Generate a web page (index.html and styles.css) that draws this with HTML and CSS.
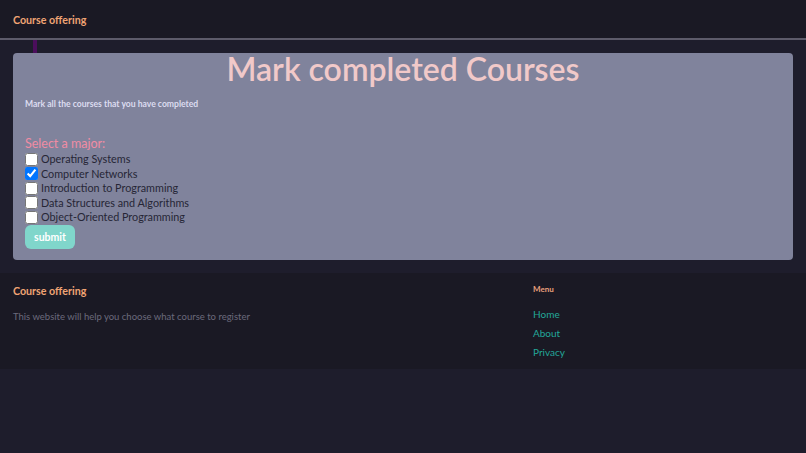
FILE: index.html
```html
<!DOCTYPE html>
<html lang="en">
<head>
    <meta charset="UTF-8">
    <title>Course offering</title>
    <link rel="stylesheet" href="styles.css">
</head>
<body>
<header class="navbar">
    <a class="brand" href="#">Course offering</a>
</header>

<main class="page">
    <div class="marker"></div>
    <div class="card">
        <h1 class="title">Mark completed Courses</h1>
        <p class="subtitle">Mark all the courses that you have completed</p>

        <form id="coursesForm" class="courses">
            <p class="major">Select a major:</p>
            <label class="course"><input type="checkbox" name="course" value="os"> Operating Systems</label>
            <label class="course"><input type="checkbox" name="course" value="net" checked> Computer Networks</label>
            <label class="course"><input type="checkbox" name="course" value="intro"> Introduction to Programming</label>
            <label class="course"><input type="checkbox" name="course" value="dsa"> Data Structures and Algorithms</label>
            <label class="course"><input type="checkbox" name="course" value="oop"> Object-Oriented Programming</label>
            <button type="submit" class="submit">submit</button>
        </form>
    </div>
</main>

<footer class="footer">
    <div class="footer-about">
        <h3 class="footer-brand">Course offering</h3>
        <p class="footer-text">This website will help you choose what course to register</p>
    </div>
    <div class="footer-menu">
        <h4 class="menu-title">Menu</h4>
        <a href="#">Home</a>
        <a href="#">About</a>
        <a href="#">Privacy</a>
    </div>
</footer>
</body>
</html>
```

FILE: styles.css
```css
body {
    margin: 0;
    font-family: Lato, "Open Sans", sans-serif;
    background-color: #1e1d2c;
}
.navbar {
    height: 37px;
    display: flex;
    align-items: center;
    padding: 1px 13px 0;
    background-color: #1a1924;
    border-bottom: 2px solid #5d5b6a;
}
.brand {
    color: #f0a474;
    font-weight: bold;
    font-size: 10.7px;
    text-decoration: none;
}
.page {
    padding: 0 13px 13px;
}
.marker {
    width: 4px;
    height: 13px;
    margin-left: 20px;
    background-color: #4b0e5c;
}
.card {
    background-color: #80839c;
    border-radius: 4px;
    padding: 0 12px 12px;
    height: 195px;
}
.title {
    margin: 0;
    text-align: center;
    font-size: 32px;
    line-height: 32px;
    color: #f1c9c9;
    font-weight: 600;
}
.subtitle {
    margin: 14px 0 0;
    font-size: 8.6px;
    font-weight: bold;
    color: #dcdcf0;
}
.courses {
    display: flex;
    flex-direction: column;
    align-items: flex-start;
    margin-top: 26px;
}
.major {
    margin: 0;
    font-size: 12.5px;
    line-height: 17px;
    color: #f08ca4;
}
.course {
    display: flex;
    align-items: center;
    gap: 3px;
    font-size: 10.8px;
    line-height: 14.5px;
    color: #262636;
}
.course input {
    width: 13px;
    height: 13px;
    margin: 0;
}
.submit {
    margin-top: 0;
    width: 50px;
    height: 24px;
    border: none;
    border-radius: 6px;
    background-color: #80d6cb;
    color: white;
    font-family: inherit;
    font-weight: bold;
    font-size: 10.5px;
    cursor: pointer;
}
.footer {
    display: flex;
    height: 96px;
    box-sizing: border-box;
    padding: 8px 13px 0;
    background-color: #1a1924;
}
.footer-about {
    width: 520px;
}
.footer-brand {
    margin: 2px 0 0;
    font-size: 10.7px;
    line-height: 15px;
    color: #f0a474;
}
.footer-text {
    margin: 13px 0 0;
    font-size: 9.5px;
    color: #6b6a7c;
}
.footer-menu {
    display: flex;
    flex-direction: column;
}
.menu-title {
    margin: 3px 0 11px;
    font-size: 8px;
    line-height: 10px;
    color: #e9a07c;
}
.footer-menu a {
    color: #23a89a;
    text-decoration: none;
    font-size: 10px;
    line-height: 19px;
}
```
